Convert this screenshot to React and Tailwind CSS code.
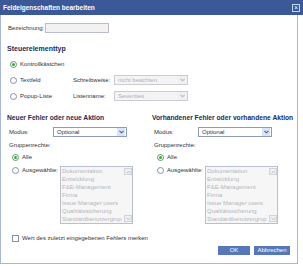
import React from "react";

const F = { fontFamily: '"Liberation Sans", Arial, sans-serif' };

function Radio({ on }) {
  return (
    <span className={"inline-flex items-center justify-center w-[7px] h-[7px] rounded-full border bg-white shrink-0 " + (on ? "border-[#5a9a6a]" : "border-[#7f93b5]")}>
      {on && <span className="w-[3px] h-[3px] rounded-full bg-[#3fa33a]" />}
    </span>
  );
}

function Arrow({ disabled }) {
  return (
    <span className={"flex items-center justify-center w-[8px] h-full shrink-0 " + (disabled ? "bg-[#eef0f3]" : "bg-[#dbe4f5]")}>
      <svg width="5" height="4" viewBox="0 0 5 4">
        <path d="M0.5 0.8 L2.5 2.8 L4.5 0.8" fill="none" stroke={disabled ? "#b8bcc4" : "#3a5fb0"} strokeWidth="1.1" />
      </svg>
    </span>
  );
}

function Select({ value, disabled, w }) {
  return (
    <div
      className={"flex items-center h-[10px] border pl-[3px] pr-[1px] " + (disabled ? "border-[#c9ccd2] bg-[#f4f4f4] text-[#b0b3b8]" : "border-[#8c9bb8] bg-white text-[#333]")}
      style={{ width: w }}
    >
      <span className="flex-1 leading-[8px] whitespace-nowrap">{value}</span>
      <span className="h-[8px] flex"><Arrow disabled={disabled} /></span>
    </div>
  );
}

const groups = ["Dokumentation", "Entwicklung", "F&E-Management", "Firma", "Issue Manager users", "Qualitätssicherung", "Standardbenutzergrup"];

function Column({ title }) {
  return (
    <div className="flex flex-col w-[148px]">
      <div className="h-[10px] leading-[10px] font-bold text-[6.7px] text-[#1c2c57] whitespace-nowrap">{title}</div>
      <div className="flex items-center h-[10px] mt-[4px] pl-[2px]">
        <span className="w-[44px] text-[#333]">Modus:</span>
        <Select value="Optional" w="74px" />
      </div>
      <div className="h-[10px] leading-[10px] mt-[3px] pl-[2px] text-[#333]">Gruppenrechte:</div>
      <div className="flex items-center gap-[3px] h-[10px] mt-[2px] pl-[5px] text-[#333]">
        <Radio on />
        <span>Alle</span>
      </div>
      <div className="flex items-start mt-[3px] pl-[5px]">
        <div className="flex items-center gap-[3px] h-[10px] w-[48px] text-[#333]">
          <Radio />
          <span>Ausgewählte:</span>
        </div>
        <div className="flex w-[73px] h-[58px] border border-[#b9c0cc] bg-[#f6f6f6] text-[#b4b7bd] mt-[1px]">
          <div className="flex-1 flex flex-col pl-[1px] overflow-hidden">
            {groups.map((g) => (
              <div key={g} className="h-[8px] leading-[8px] whitespace-nowrap">{g}</div>
            ))}
          </div>
          <div className="w-[8px] flex flex-col justify-between py-[1px]">
            <span className="h-[7px] flex items-center justify-center border border-[#d0d4da] bg-[#eef0f3]">
              <svg width="5" height="4" viewBox="0 0 5 4"><path d="M0.5 3.2 L2.5 1.2 L4.5 3.2" fill="none" stroke="#b8bcc4" strokeWidth="1" /></svg>
            </span>
            <span className="h-[7px] flex items-center justify-center border border-[#d0d4da] bg-[#eef0f3]">
              <svg width="5" height="4" viewBox="0 0 5 4"><path d="M0.5 0.8 L2.5 2.8 L4.5 0.8" fill="none" stroke="#b8bcc4" strokeWidth="1" /></svg>
            </span>
          </div>
        </div>
      </div>
    </div>
  );
}

export default function App() {
  return (
    <div className="w-[303px] h-[266px] bg-white overflow-hidden text-[6px]" style={F}>
      <div className="h-[15px] bg-[#3b5899] flex items-center justify-between pl-[3px] pr-[3px]">
        <span className="text-white font-bold text-[6.5px]">Feldeigenschaften bearbeiten</span>
        <span className="w-[8px] h-[8px] border border-[#c9d3ea] flex items-center justify-center text-white text-[7px] leading-none">×</span>
      </div>
      <div className="w-[298px] h-[249px] border-l border-r border-b border-[#a9b7d6] flex flex-col pl-[6px]">
        <div className="flex items-center h-[10px] mt-[8px] text-[#333]">
          <span className="w-[38px] pl-[1px]">Bezeichnung:</span>
          <div className="w-[64px] h-[10px] border border-[#b9c0cc] bg-[#f2f2f2]" />
        </div>
        <div className="h-[10px] leading-[10px] mt-[11px] font-bold text-[7px] text-[#1c2c57]">Steuerelementtyp</div>
        <div className="flex items-center gap-[3px] h-[10px] mt-[5px] pl-[3px] text-[#333]">
          <Radio on />
          <span>Kontrollkästchen</span>
        </div>
        <div className="flex items-center h-[10px] mt-[6px] pl-[3px] text-[#333]">
          <div className="flex items-center gap-[3px] w-[63px]">
            <Radio />
            <span>Textfeld</span>
          </div>
          <span className="w-[41px]">Schreibweise:</span>
          <Select value="nicht beachten" disabled w="74px" />
        </div>
        <div className="flex items-center h-[10px] mt-[6px] pl-[3px] text-[#333]">
          <div className="flex items-center gap-[3px] w-[63px]">
            <Radio />
            <span>Popup-Liste</span>
          </div>
          <span className="w-[41px]">Listenname:</span>
          <Select value="Seventies" disabled w="74px" />
        </div>
        <div className="flex mt-[12px]">
          <Column title="Neuer Fehler oder neue Aktion" />
          <Column title="Vorhandener Fehler oder vorhandene Aktion" />
        </div>
        <div className="flex items-center gap-[3px] h-[10px] mt-[9px] pl-[5px] text-[#333]">
          <span className="w-[7px] h-[7px] border border-[#7f93b5] bg-white shrink-0" />
          <span>Wert des zuletzt eingegebenen Fehlers merken</span>
        </div>
        <div className="flex justify-end gap-[4px] mt-[3px] pr-[7px]">
          <button className="w-[32px] h-[9px] bg-[#5877b8] text-white text-[6px] leading-[9px]">OK</button>
          <button className="w-[36px] h-[9px] bg-[#5877b8] text-white text-[6px] leading-[9px]">Abbrechen</button>
        </div>
      </div>
    </div>
  );
}
